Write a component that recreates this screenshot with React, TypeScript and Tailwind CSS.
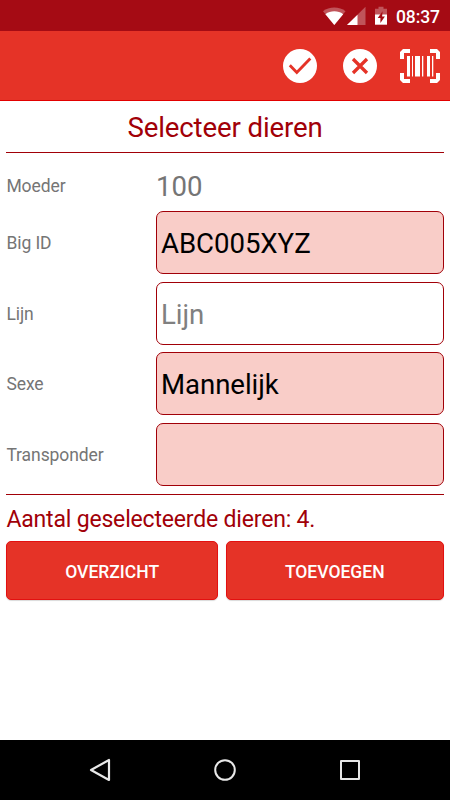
import React from "react";

const fields = [
  { label: "Big ID", value: "ABC005XYZ", box: "bg-[#f9cdc8] text-black" },
  { label: "Lijn", value: "Lijn", box: "bg-white text-[#808080]" },
  { label: "Sexe", value: "Mannelijk", box: "bg-[#f9cdc8] text-black" },
  { label: "Transponder", value: "", box: "bg-[#f9cdc8] text-black" },
];

function StatusBar() {
  return (
    <div className="flex h-[31px] items-start justify-end bg-[#a50b14] pr-[10px] text-white">
      <svg className="mt-[6px] h-[20px] w-[70px] shrink-0" viewBox="0 0 70 20" fill="currentColor">
        <path d="M0 5.2C6 0.2 16.500 0.2 22.500 5.2L11.300 19Z" opacity=".3" />
        <path d="M2.400 8.200C7.500 4.400 15.100 4.400 20.200 8.200L11.300 19Z" />
        <path d="M24 19L42.500 0.800V19Z" opacity=".3" />
        <path d="M24 19L34.500 8.700V19Z" />
        <path d="M55.500 0.800h5v1.900h3.500V9H52V2.700h3.500Z" opacity=".3" />
        <path d="M52 8.500h12V18.700H52Z" />
        <path d="M59.600 5.300L54.700 12.100h2.700v5l4.500-6.600h-2.800Z" fill="#a50b14" />
      </svg>
      <span className="ml-[3px] mt-[7px] w-[44px] whitespace-nowrap text-[17.5px] font-medium leading-[21px] tracking-[-0.1px]">08:37</span>
    </div>
  );
}

function Toolbar() {
  return (
    <div className="flex h-[70px] items-center justify-end border-b border-[#e20000] bg-[#e53327] pr-[10px] text-white">
      <svg className="h-[34px] w-[34px]" viewBox="0 0 34 34">
        <circle cx="17" cy="17" r="17" fill="currentColor" />
        <path d="M6.800 16.200l7 7.200L27.300 9.500" fill="none" stroke="#e53327" strokeWidth="2.900" />
      </svg>
      <svg className="ml-[26px] h-[34px] w-[34px]" viewBox="0 0 34 34">
        <circle cx="17" cy="17" r="17" fill="currentColor" />
        <path d="M10 10L24 24M24 10L10 24" fill="none" stroke="#e53327" strokeWidth="3.300" />
      </svg>
      <svg className="ml-[23px] h-[34px] w-[40px]" viewBox="0 0 40 34" fill="currentColor">
        <path d="M3 0H10V4H4V10H0V3ZM30 0H37L40 3V10H36V4H30ZM0 24H4V30H10V34H3L0 31ZM36 24H40V31L37 34H30V30H36Z" />
        <path d="M7 7h3v20.500H7zM12 7h1v20.500h-1zM15 7h5v20.500h-5zM22 7h1.300v20.500H22zM27 7h3v20.500H27zM32 7h1.300v20.500H32z" />
      </svg>
    </div>
  );
}

export default function App() {
  return (
    <div className="flex h-[800px] w-[450px] flex-col overflow-hidden bg-white font-['Roboto',sans-serif]">
      <StatusBar />
      <Toolbar />
      <main className="flex-1 px-[6.400px]">
        <h1 className="h-[52px] border-b border-[#a10008] pt-[10px] text-center text-[27.600px] leading-[33px] tracking-[-0.120px] text-[#a10008]">
          Selecteer dieren
        </h1>
        <div className="flex h-[58.300px] items-center pt-[8px] text-[#757575]">
          <span className="w-[149.600px] text-[17.500px] tracking-[-0.080px]">Moeder</span>
          <span className="pt-[1px] text-[27.600px]">100</span>
        </div>
        <div className="flex flex-col gap-[7.800px]">
          {fields.map((f) => (
            <div key={f.label} className="flex h-[62.800px] items-center">
              <span className="w-[149.600px] shrink-0 pt-[1px] text-[17.500px] tracking-[-0.080px] text-[#757575]">{f.label}</span>
              <div className={"flex h-full flex-1 items-center rounded-[7px] border border-[#a10008] pl-[4px] pt-[2px] text-[27.600px] tracking-[-0.050px] " + f.box}>
                {f.value}
              </div>
            </div>
          ))}
        </div>
        <p className="mt-[8.400px] h-[47px] border-t border-[#a10008] pt-[11px] text-[23px] leading-[27px] tracking-[-0.180px] text-[#a10008]">
          Aantal geselecteerde dieren: 4.
        </p>
        <div className="flex h-[59px] gap-[8px] text-[17.500px] font-medium text-white">
          <button className="w-[211.500px] rounded-[5px] border border-[#e31010] bg-[#e53327] pt-[2px] shadow-[0_1px_1px_rgba(0,0,0,0.15)]">OVERZICHT</button>
          <button className="flex-1 rounded-[5px] border border-[#e31010] bg-[#e53327] pt-[2px] shadow-[0_1px_1px_rgba(0,0,0,0.15)]">TOEVOEGEN</button>
        </div>
      </main>
      <nav className="flex h-[60px] items-center bg-black pl-[89px] text-[#e8e8e8]">
        <svg className="h-[24px] w-[22px]" viewBox="0 0 22 24" fill="none" stroke="currentColor" strokeWidth="2.200" strokeLinejoin="round">
          <path d="M2 12L20 2V22Z" />
        </svg>
        <svg className="ml-[103px] h-[22px] w-[22px]" viewBox="0 0 22 22" fill="none" stroke="currentColor" strokeWidth="2">
          <circle cx="11" cy="11" r="9.800" />
        </svg>
        <span className="ml-[104px] h-[20px] w-[20px] rounded-[1px] border-2 border-[#e8e8e8]" />
      </nav>
    </div>
  );
}
